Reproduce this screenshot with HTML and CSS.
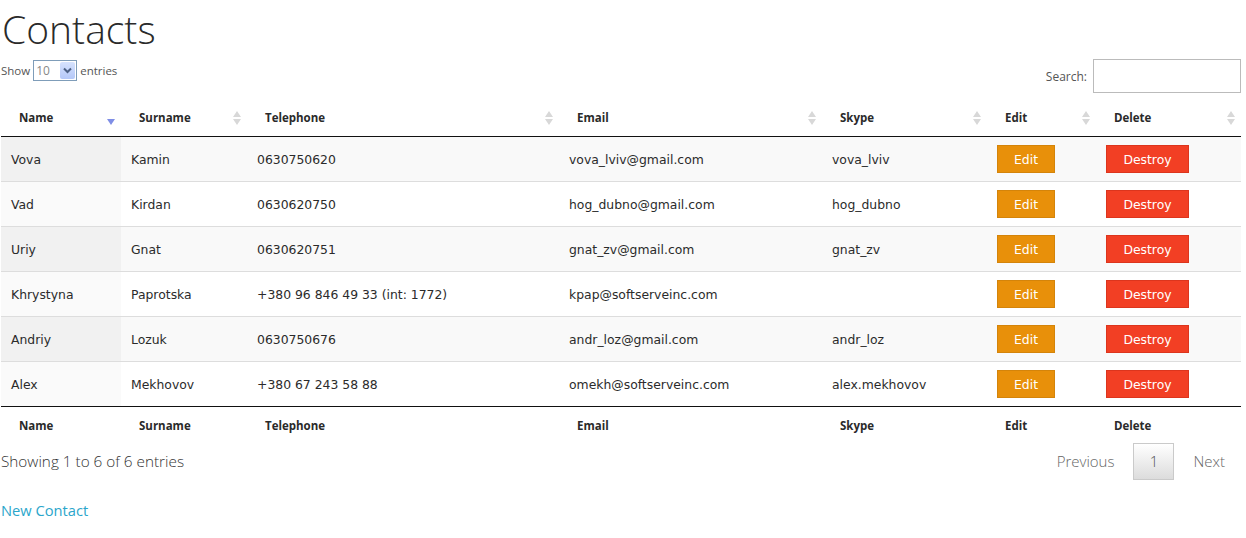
FILE: index.html
```html
<!DOCTYPE html>
<html>
<head>
<meta charset="utf-8">
<title>Contacts</title>
<link rel="stylesheet" href="styles.css">
</head>
<body>
<div class="page">
  <h1 class="title">Contacts</h1>
  <div class="controls">
    <div class="length">Show <span class="select"><span class="select-val">10</span><span class="select-btn"><svg width="9" height="7" viewBox="0 0 9 7"><path d="M1 1.5 L4.5 5 L8 1.5" fill="none" stroke="#4d6185" stroke-width="2"/></svg></span></span> entries</div>
    <div class="search"><span class="search-label">Search:</span><span class="search-input"></span></div>
  </div>
  <table class="grid">
    <colgroup>
      <col style="width:120px"><col style="width:126px"><col style="width:312px"><col style="width:263px"><col style="width:165px"><col style="width:109px"><col style="width:145px">
    </colgroup>
    <thead>
      <tr>
        <th><div class="th-in"><span>Name</span><span class="sort-desc"></span></div></th>
        <th><div class="th-in"><span>Surname</span><span class="sort-both"></span></div></th>
        <th><div class="th-in"><span>Telephone</span><span class="sort-both"></span></div></th>
        <th><div class="th-in"><span>Email</span><span class="sort-both"></span></div></th>
        <th><div class="th-in"><span>Skype</span><span class="sort-both"></span></div></th>
        <th><div class="th-in"><span>Edit</span><span class="sort-both"></span></div></th>
        <th><div class="th-in"><span>Delete</span><span class="sort-both"></span></div></th>
      </tr>
    </thead>
    <tbody>
      <tr><td class="sorted">Vova</td><td>Kamin</td><td>0630750620</td><td>vova_lviv@gmail.com</td><td>vova_lviv</td><td><a class="btn btn-edit">Edit</a></td><td><a class="btn btn-destroy">Destroy</a></td></tr>
      <tr><td class="sorted">Vad</td><td>Kirdan</td><td>0630620750</td><td>hog_dubno@gmail.com</td><td>hog_dubno</td><td><a class="btn btn-edit">Edit</a></td><td><a class="btn btn-destroy">Destroy</a></td></tr>
      <tr><td class="sorted">Uriy</td><td>Gnat</td><td>0630620751</td><td>gnat_zv@gmail.com</td><td>gnat_zv</td><td><a class="btn btn-edit">Edit</a></td><td><a class="btn btn-destroy">Destroy</a></td></tr>
      <tr><td class="sorted">Khrystyna</td><td>Paprotska</td><td>+380 96 846 49 33 (int: 1772)</td><td>kpap@softserveinc.com</td><td></td><td><a class="btn btn-edit">Edit</a></td><td><a class="btn btn-destroy">Destroy</a></td></tr>
      <tr><td class="sorted">Andriy</td><td>Lozuk</td><td>0630750676</td><td>andr_loz@gmail.com</td><td>andr_loz</td><td><a class="btn btn-edit">Edit</a></td><td><a class="btn btn-destroy">Destroy</a></td></tr>
      <tr><td class="sorted">Alex</td><td>Mekhovov</td><td>+380 67 243 58 88</td><td>omekh@softserveinc.com</td><td>alex.mekhovov</td><td><a class="btn btn-edit">Edit</a></td><td><a class="btn btn-destroy">Destroy</a></td></tr>
    </tbody>
    <tfoot>
      <tr><th>Name</th><th>Surname</th><th>Telephone</th><th>Email</th><th>Skype</th><th>Edit</th><th>Delete</th></tr>
    </tfoot>
  </table>
  <div class="bottom">
    <div class="info">Showing 1 to 6 of 6 entries</div>
    <div class="paging"><span class="pg">Previous</span><span class="pg-cur">1</span><span class="pg pg-next">Next</span></div>
  </div>
  <a class="new-link">New Contact</a>
</div>
</body>
</html>
```
FILE: styles.css
```css
html, body { margin: 0; padding: 0; background: #fff; }
body { font-family: "Open Sans", sans-serif; color: #333; }
.page { padding: 0 5px 0 1px; }
.title {
  margin: 0;
  font-family: "Open Sans", sans-serif;
  font-weight: 300;
  font-size: 39px;
  line-height: 57px;
  color: #2a2a2a;
  padding-left: 1px;
}
.controls {
  display: flex;
  justify-content: space-between;
  align-items: flex-start;
  height: 41px;
  margin-top: 1px;
}
.length {
  display: flex;
  align-items: center;
  font-size: 11.5px;
  color: #555;
  margin-top: 2px;
  gap: 3px;
}
.select {
  display: inline-flex;
  align-items: center;
  justify-content: space-between;
  width: 42px;
  height: 19px;
  border: 1px solid #7f9db9;
  background: #fff;
  box-sizing: content-box;
}
.select-val { font-size: 12px; color: #888; padding-left: 2px; }
.select-btn {
  width: 15px;
  height: 17px;
  margin-right: 1px;
  background: linear-gradient(#d6e2fd, #b4c8f8);
  border-radius: 2px;
  display: flex;
  align-items: center;
  justify-content: center;
}
.search {
  display: flex;
  align-items: center;
  gap: 6px;
  font-size: 12px;
  color: #555;
  margin-top: 1px;
}
.search-input {
  display: block;
  width: 146px;
  height: 32px;
  border: 1px solid #bbb;
  background: #fff;
}
.grid {
  width: 1240px;
  table-layout: fixed;
  border-collapse: collapse;
}
.grid th {
  font-family: "Open Sans", sans-serif;
  font-weight: 700;
  font-size: 11.5px;
  color: #2a2a2a;
  text-align: left;
  padding: 0 0 0 18px;
  height: 37px;
}
.grid thead th { border-bottom: 1px solid #111; }
.th-in {
  display: flex;
  justify-content: space-between;
  align-items: center;
  padding-right: 6px;
}
.sort-both {
  display: inline-block;
  width: 8px;
  height: 14px;
  position: relative;
}
.sort-both::before, .sort-both::after {
  content: "";
  position: absolute;
  left: 0;
  width: 0; height: 0;
  border-left: 4px solid transparent;
  border-right: 4px solid transparent;
}
.sort-both::before { top: 0; border-bottom: 6px solid #d8d8d8; }
.sort-both::after { bottom: 0; border-top: 6px solid #d8d8d8; }
.sort-desc {
  display: inline-block;
  width: 0; height: 0;
  border-left: 4px solid transparent;
  border-right: 4px solid transparent;
  border-top: 6px solid #7f8ee6;
  margin-top: 8px;
}
.grid td {
  font-family: "DejaVu Sans", Verdana, sans-serif;
  font-size: 12.4px;
  color: #2b2b2b;
  padding: 0 0 0 10px;
  height: 44px;
  border-bottom: 1px solid #ddd;
  white-space: nowrap;
}
.grid tbody tr:nth-child(odd) td { background: #f9f9f9; }
.grid tbody tr:nth-child(even) td { background: #fff; }
.grid tbody tr:nth-child(odd) td.sorted { background: #f1f1f1; }
.grid tbody tr:nth-child(even) td.sorted { background: #fafafa; }
.grid tbody tr:last-child td { border-bottom: 1px solid #111; }
.grid tfoot th { height: 37px; }
.btn {
  display: inline-block;
  height: 26px;
  line-height: 27px;
  padding: 0 15px;
  font-family: "DejaVu Sans", Verdana, sans-serif;
  font-size: 12.4px;
  color: #fff;
  border: 1px solid;
}
.btn-edit { background: #e8900a; border-color: #d4840a; width: 26px; text-align: center; }
.btn-destroy { background: #f23f24; border-color: #dc351d; width: 51px; text-align: center; }
.bottom {
  display: flex;
  justify-content: space-between;
  align-items: center;
  height: 36px;
  margin-top: -1px;
}
.info { font-size: 15.3px; font-weight: 300; color: #333; }
.paging { display: flex; align-items: center; }
.pg { font-size: 15px; font-weight: 300; color: #666; padding: 0 19px; }
.pg-next { padding-right: 16px; }
.pg-cur {
  display: flex;
  align-items: center;
  justify-content: center;
  width: 39px;
  height: 35px;
  border: 1px solid #cacaca;
  background: linear-gradient(#fff, #dcdcdc);
  font-size: 15px;
  font-weight: 300;
  color: #555;
}
.new-link {
  display: inline-block;
  margin-top: 21px;
  font-size: 14.7px;
  color: #2ba6cb;
  cursor: pointer;
}
```
